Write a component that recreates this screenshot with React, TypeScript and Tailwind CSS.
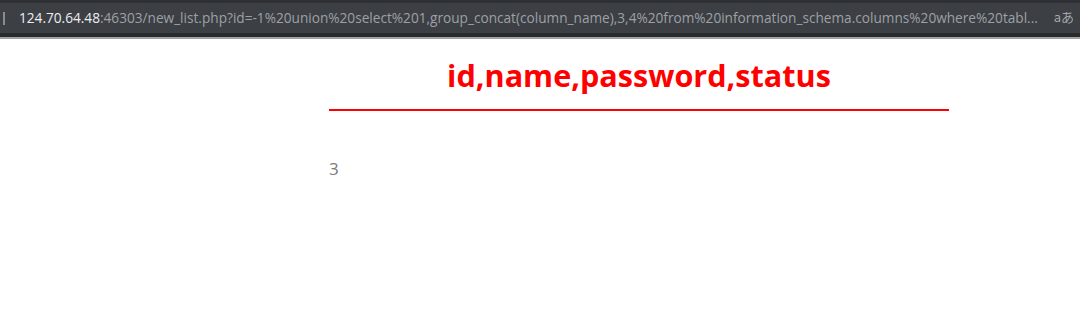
import React from "react";

export default function App() {
  return (
    <div className="w-[1080px] h-[336px] bg-white overflow-hidden">
      {/* browser address bar */}
      <div className="h-[3px] bg-[#2e3034]" />
      <div className="h-[30px] bg-[#3c3f44] flex items-center relative">
        <div className="w-[2px] h-[13px] bg-[#8a8c90] ml-[3px]" />
        <div
          className="ml-[14px] text-[13.65px] whitespace-nowrap text-[#9da1a6] leading-none"
          style={{ fontFamily: '"Open Sans", "Noto Sans", sans-serif' }}
        >
          <span className="text-[#eceef1]">124.70.64.48</span>
          :46303/new_list.php?id=-1%20union%20select%201,group_concat(column_name),3,4%20from%20information_schema.columns%20where%20tabl...
        </div>
        <div
          className="absolute right-[6px] top-[7px] text-[13px] text-[#a4a7ab] leading-none"
          style={{ fontFamily: '"Noto Sans CJK JP", sans-serif' }}
        >
          aあ
        </div>
      </div>
      <div className="h-[4px] bg-[#2a2b2e]" />
      <div className="h-[2px] bg-[#a3a3a3]" />

      {/* content */}
      <div className="ml-[329px] w-[620px]">
        <h1
          className="mt-[16px] text-center text-[30.6px] leading-[40px] font-bold text-[#ff0000]"
          style={{ fontFamily: '"Open Sans", "Noto Sans", sans-serif' }}
        >
          id,name,password,status
        </h1>
        <div className="mt-[14px] h-[2px] bg-[#ff0000]" />
        <p
          className="mt-[46px] text-[17px] leading-[24px] text-[#7a7a7a]"
          style={{ fontFamily: '"Open Sans", "Noto Sans", sans-serif' }}
        >
          3
        </p>
      </div>
    </div>
  );
}
